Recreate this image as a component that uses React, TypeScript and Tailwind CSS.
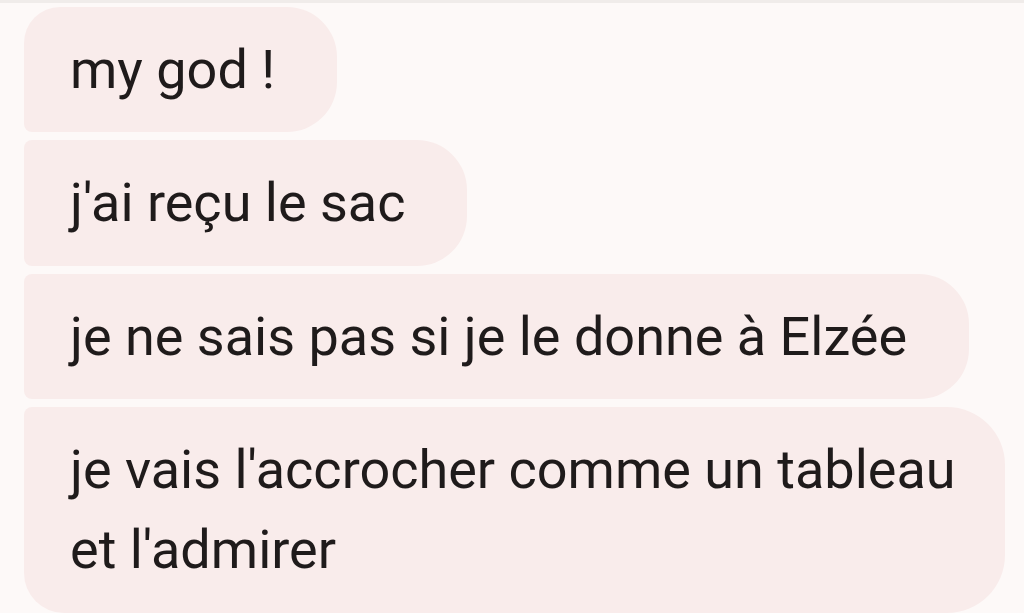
export default function App() {
  const messages = [
    { text: "my god !", shape: "rounded-tl-[36px] rounded-bl-[8px] rounded-r-[50px]" },
    { text: "j'ai reçu le sac", shape: "rounded-l-[8px] rounded-r-[50px]" },
    { text: "je ne sais pas si je le donne à Elzée", shape: "rounded-l-[8px] rounded-r-[50px]" },
  ];

  return (
    <div
      className="w-[1024px] h-[613px] overflow-hidden bg-[#fdf9f8] border-t-[3px] border-[#f0ecea] pl-[24px] pt-[4px] flex flex-col gap-[8px] text-[#1f1b1b]"
      style={{ fontFamily: "Roboto, 'Noto Sans', sans-serif" }}
    >
      {messages.map((m) => (
        <div
          key={m.text}
          className={`self-start h-[126px] bg-[#f9eceb] pl-[46px] pr-[62px] pt-[23px] text-[54px] leading-[80px] whitespace-nowrap ${m.shape}`}
        >
          {m.text}
        </div>
      ))}
      <div className="self-start w-[981px] bg-[#f9eceb] rounded-tl-[8px] rounded-bl-[40px] rounded-r-[58px] pl-[46px] pr-[24px] pt-[23px] pb-[23px] text-[54px] leading-[80px]">
        je vais l'accrocher comme un tableau et l'admirer
      </div>
    </div>
  );
}
